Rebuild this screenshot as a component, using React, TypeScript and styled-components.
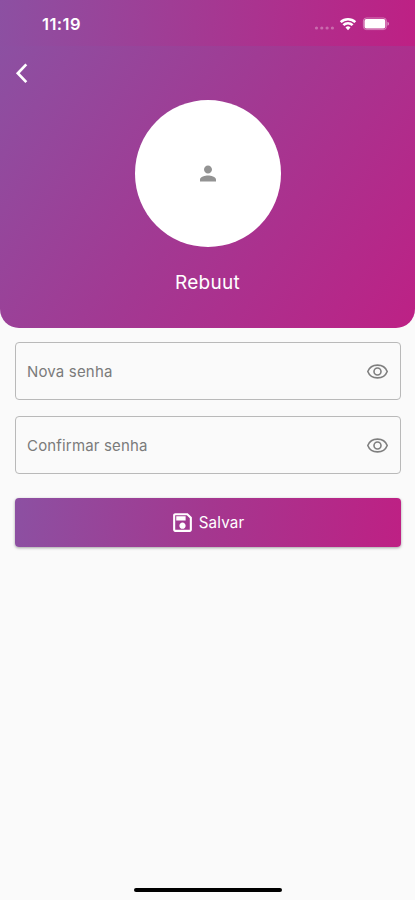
import React from "react";
import styled, { createGlobalStyle } from "styled-components";

const GlobalStyle = createGlobalStyle`
  * { box-sizing: border-box; }
  body { margin: 0; background: #fafafa; font-family: Inter, "Liberation Sans", sans-serif; }
`;

const Screen = styled.main`
  display: flex;
  flex-direction: column;
  width: 415px;
  height: 900px;
  background: #fafafa;
  overflow: hidden;
`;

const StatusBar = styled.header`
  display: flex;
  align-items: center;
  justify-content: space-between;
  height: 46px;
  padding: 2px 26px 0 42px;
  background: linear-gradient(96.3deg, #8c50a2 0%, #a33a93 47%, #be2084 100%);
  color: #fff;
`;

const Clock = styled.span`
  font-size: 16.5px;
  font-weight: 600;
  line-height: 20px;
  letter-spacing: 0.45px;
`;

const StatusIcons = styled.div`
  display: flex;
  align-items: center;
`;

const Profile = styled.section`
  display: flex;
  flex-direction: column;
  align-items: center;
  height: 281.5px;
  background: linear-gradient(124deg, #8c50a2 0%, #a33892 50%, #bd2185 100%);
  border-radius: 0 0 19px 19px;
`;

const NavRow = styled.div`
  display: flex;
  align-self: stretch;
  height: 54px;
  padding: 17px 0 0 15px;
`;

const BackButton = styled.button`
  display: flex;
  width: 14px;
  height: 21px;
  padding: 0;
  border: 0;
  background: none;
`;

const Avatar = styled.div`
  display: flex;
  align-items: center;
  justify-content: center;
  width: 146px;
  height: 146.5px;
  border-radius: 50%;
  background: #fff;
`;

const UserName = styled.h1`
  margin: 24.5px 0 0;
  color: #fff;
  font-size: 19px;
  font-weight: 400;
  line-height: 24px;
  letter-spacing: 0.25px;
`;

const Form = styled.form`
  display: flex;
  flex-direction: column;
  gap: 16px;
  padding: 14.5px 14px 0 15px;
`;

const Field = styled.div`
  display: flex;
  align-items: center;
  justify-content: space-between;
  height: 58px;
  padding: 0 11px;
  border: 1px solid #b9b9b9;
  border-radius: 4px;
`;

const FieldLabel = styled.label`
  padding-top: 1px;
  color: #7b7b7b;
  font-size: 15px;
  line-height: 20px;
  letter-spacing: 0.17px;
`;

const SaveButton = styled.button`
  display: flex;
  align-items: center;
  justify-content: center;
  gap: 4px;
  height: 49px;
  margin-top: 8px;
  padding: 0 2px 0 0;
  border: 0;
  border-radius: 4px;
  background: linear-gradient(96.7deg, #8c50a2 0%, #a4378f 50%, #be2084 100%);
  box-shadow: 0 1px 3px rgba(0, 0, 0, 0.35);
  color: #fff;
  font: 400 15.2px/20px Inter, "Liberation Sans", sans-serif;
  letter-spacing: 0.15px;
`;

const HomeIndicator = styled.div`
  width: 148px;
  height: 4px;
  margin: auto auto 8px 134px;
  border-radius: 2px;
  background: #000;
`;

const EyeIcon = () => (
  <svg width="23" height="23" viewBox="0 0 23 23" fill="none" stroke="#7f7f7f" strokeWidth="1.6">
    <path d="M1.8 11.5C3.3 7.5 7 5.1 11.5 5.1s8.2 2.4 9.7 6.4c-1.5 4-5.2 6.4-9.7 6.4s-8.2-2.4-9.7-6.4z" />
    <circle cx="11.5" cy="11.5" r="3.5" />
  </svg>
);

const SaveIcon = () => (
  <svg width="25" height="25" viewBox="0 0 24 24" fill="#fff">
    <path d="M17 3H5c-1.11 0-2 .9-2 2v14c0 1.1.89 2 2 2h14c1.1 0 2-.9 2-2V7l-4-4zm2 16H5V5h11.17L19 7.83V19zm-7-7c-1.66 0-3 1.34-3 3s1.34 3 3 3 3-1.34 3-3-1.34-3-3-3zM6 6h9v4H6z" />
  </svg>
);

const fields = ["Nova senha", "Confirmar senha"];

export default function App() {
  return (
    <>
      <GlobalStyle />
      <Screen>
        <StatusBar>
          <Clock>11:19</Clock>
          <StatusIcons>
            <svg width="75" height="16" viewBox="0 0 75 16" fill="#fff">
              <g opacity="0.3">
                <circle cx="2.5" cy="12" r="1.6" />
                <circle cx="7.8" cy="12" r="1.6" />
                <circle cx="13.1" cy="12" r="1.6" />
                <circle cx="18.4" cy="12" r="1.6" />
              </g>
              <g fill="none" stroke="#fff" strokeWidth="2.6">
                <path d="M26.7 6.1a10.6 10.6 0 0 1 14.6 0" />
                <path d="M29.4 9.1a6.5 6.5 0 0 1 9.2 0" />
              </g>
              <path d="M31.5 11.4a3.6 3.6 0 0 1 5 0L34 14.2z" />
              <rect x="49.4" y="2" width="23" height="11.6" rx="3" fill="none" stroke="#fff" strokeOpacity="0.4" />
              <rect x="50.5" y="3.1" width="20.8" height="9.4" rx="1.8" />
              <path d="M73.5 5.8q1.5.7 1.5 2t-1.5 2z" opacity="0.55" />
            </svg>
          </StatusIcons>
        </StatusBar>
        <Profile>
          <NavRow>
            <BackButton type="button" aria-label="Voltar">
              <svg width="14" height="21" viewBox="0 0 14 21" fill="none" stroke="#fff" strokeWidth="2.7">
                <path d="M11.3 1.4 2.8 10.2l8.5 8.9" />
              </svg>
            </BackButton>
          </NavRow>
          <Avatar>
            <svg width="24" height="24" viewBox="0 -0.5 24 24" fill="#939393">
              <path d="M12 12c2.21 0 4-1.79 4-4s-1.79-4-4-4-4 1.79-4 4 1.79 4 4 4zm0 2c-2.67 0-8 1.34-8 4v2h16v-2c0-2.66-5.33-4-8-4z" />
            </svg>
          </Avatar>
          <UserName>Rebuut</UserName>
        </Profile>
        <Form>
          {fields.map((label) => (
            <Field key={label}>
              <FieldLabel>{label}</FieldLabel>
              <EyeIcon />
            </Field>
          ))}
          <SaveButton type="button">
            <SaveIcon />
            Salvar
          </SaveButton>
        </Form>
        <HomeIndicator />
      </Screen>
    </>
  );
}
